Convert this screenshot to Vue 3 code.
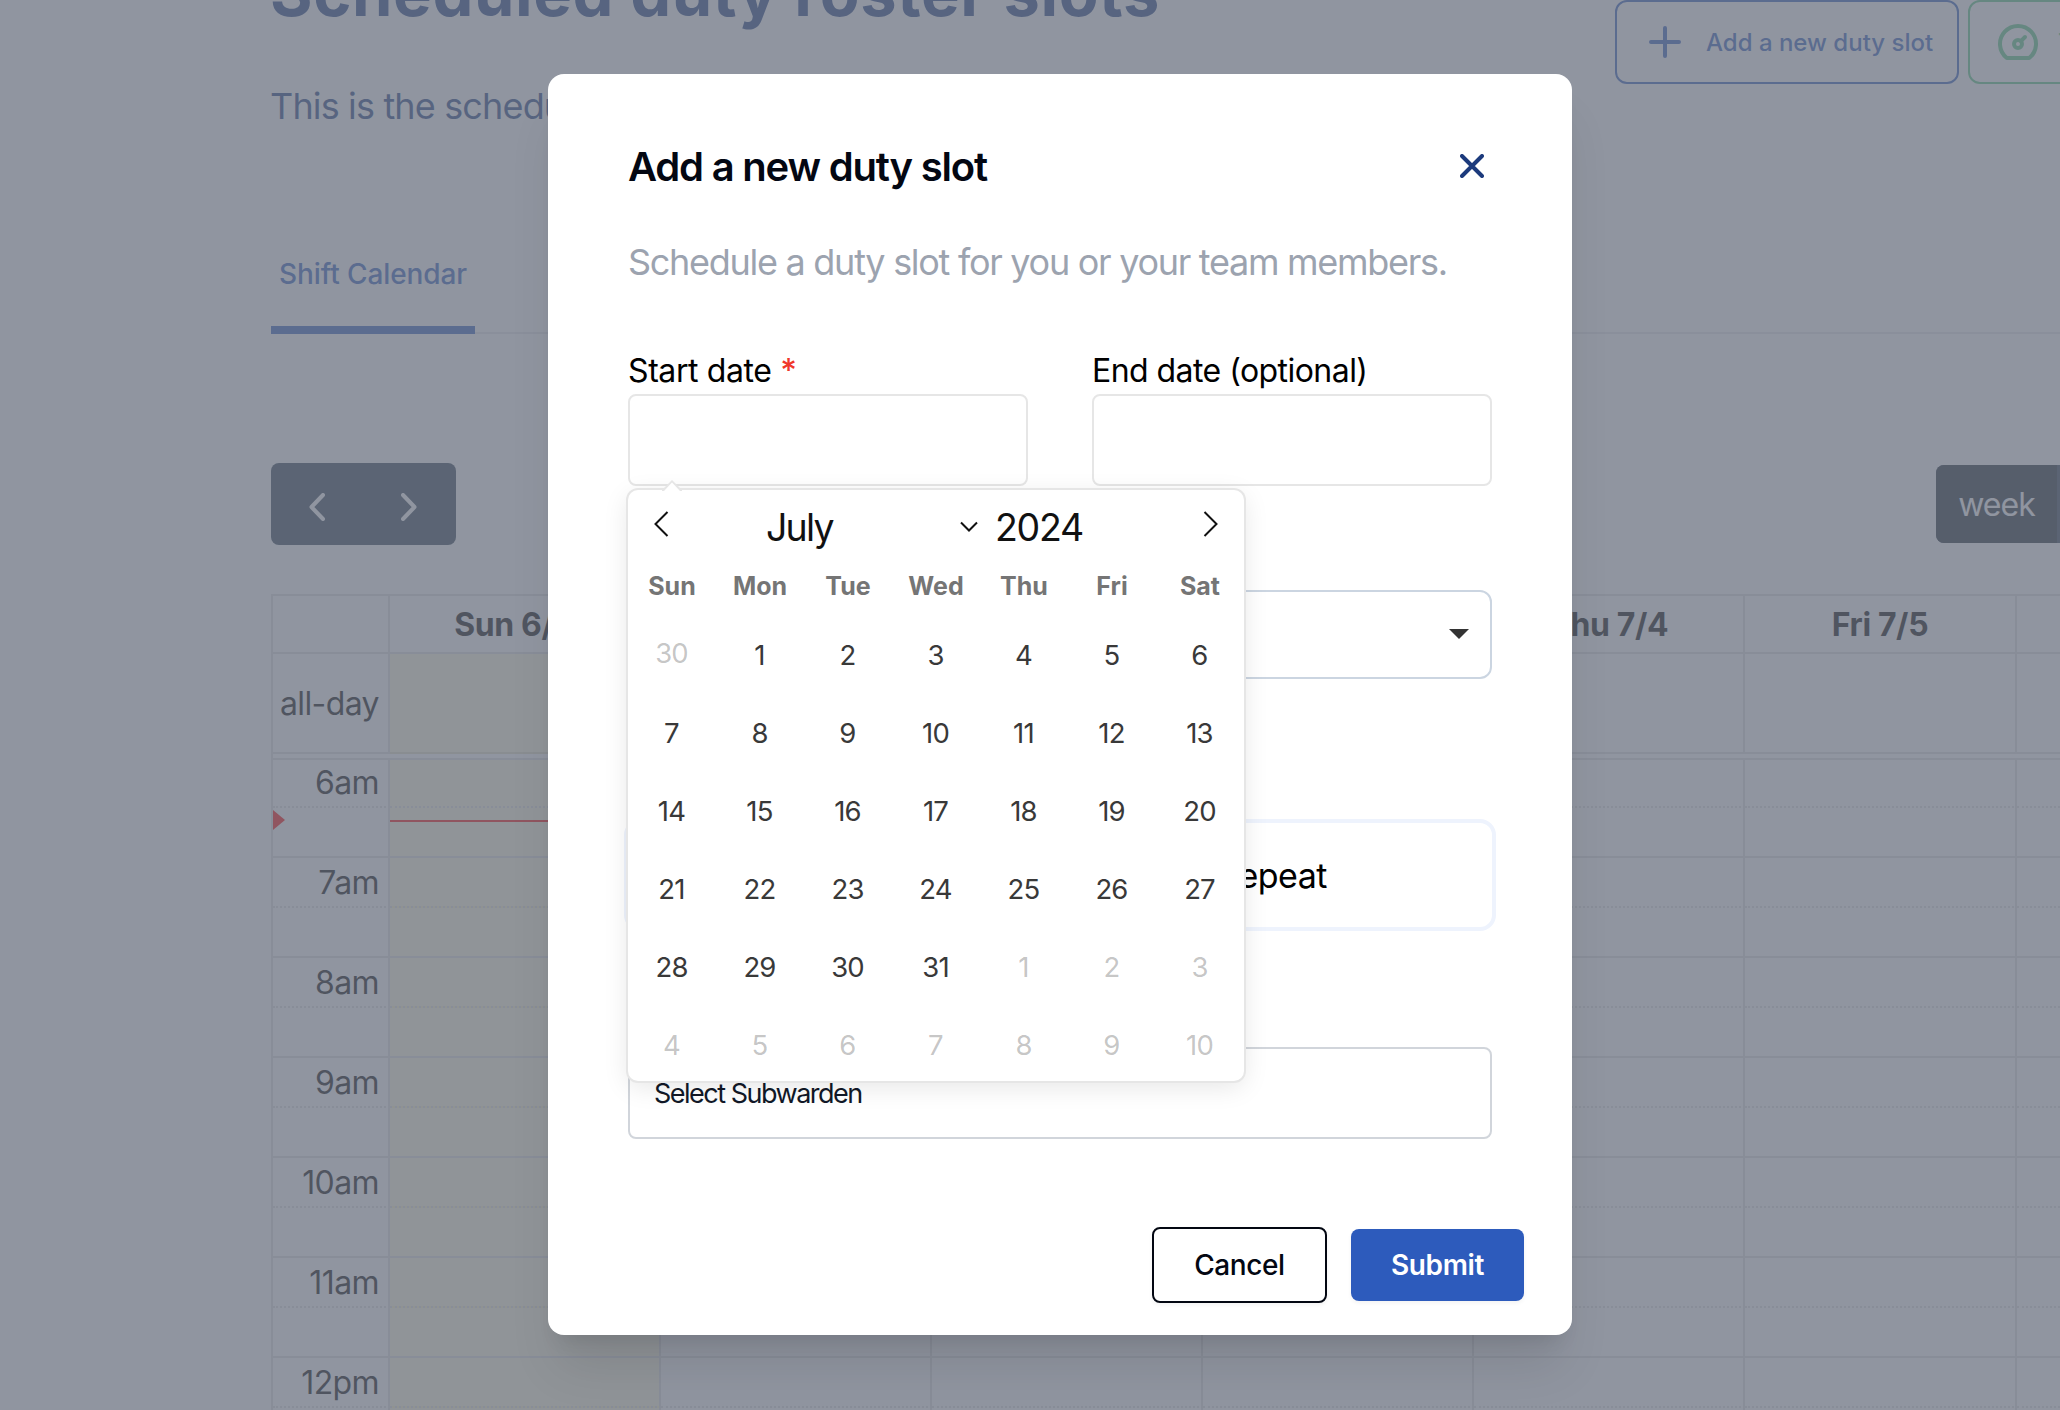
<template>
  <div class="screen">
    <div class="page">
      <header class="page-header">
        <div class="page-intro">
          <h1 class="page-title">Scheduled duty roster slots</h1>
          <p class="page-text">This is the scheduled duty roster</p>
        </div>
        <button class="action action--blue">
          <svg width="48" height="48" viewBox="0 0 24 24" fill="none" stroke="currentColor" stroke-width="2" stroke-linecap="round">
            <path d="M12 5v14M5 12h14" />
          </svg>
          <span>Add a new duty slot</span>
        </button>
        <button class="action action--green">
          <svg width="48" height="48" viewBox="0 0 24 24" fill="none" stroke="currentColor" stroke-width="2" stroke-linecap="round" stroke-linejoin="round">
            <circle cx="12" cy="13" r="2" />
            <path d="M13.45 11.55L15.5 9.5" />
            <path d="M6.4 20a9 9 0 1 1 11.2 0z" />
          </svg>
          <span>T</span>
        </button>
      </header>

      <nav class="tabs">
        <a class="tab">Shift Calendar</a>
      </nav>

      <div class="toolbar">
        <div class="nav-group">
          <svg width="16" height="28" viewBox="0 0 16 28" fill="none" stroke="currentColor" stroke-width="4" stroke-linecap="round" stroke-linejoin="round">
            <path d="M14 2L2.5 14L14 26" />
          </svg>
          <svg width="16" height="28" viewBox="0 0 16 28" fill="none" stroke="currentColor" stroke-width="4" stroke-linecap="round" stroke-linejoin="round">
            <path d="M2 2l11.5 12L2 26" />
          </svg>
        </div>
        <div class="view-group">
          <button class="view view--active">week</button>
          <button class="view">day</button>
        </div>
      </div>

      <div class="calendar">
        <div class="row row--head">
          <div class="cell"></div>
          <div v-for="day in weekDays" :key="day" class="cell">{{ day }}</div>
        </div>
        <div class="row row--allday">
          <div class="cell cell--axis">all-day</div>
          <div v-for="(day, i) in weekDays" :key="day" :class="['cell', { 'cell--today': i === 0 }]"></div>
        </div>
        <div class="divider"></div>
        <div class="slots">
          <div v-for="(slot, n) in slots" :key="n" :class="['row', 'row--slot', { 'row--half': !slot }]">
            <div class="cell cell--axis">{{ slot }}</div>
            <div v-for="(day, i) in weekDays" :key="day" :class="['cell', { 'cell--today': i === 0 }]"></div>
          </div>
          <!-- Current time -->
          <div class="now-arrow"></div>
          <div class="now-line"></div>
        </div>
      </div>
    </div>

    <div class="backdrop"></div>

    <div class="modal-wrap">
      <section class="modal">
        <div class="modal-head">
          <h2 class="modal-title">Add a new duty slot</h2>
          <svg width="24" height="24" viewBox="0 0 24 24" fill="none" stroke="currentColor" stroke-width="4" stroke-linecap="round">
            <path d="M2 2l20 20M22 2L2 22" />
          </svg>
        </div>
        <p class="modal-text">Schedule a duty slot for you or your team members.</p>

        <div class="dates">
          <div class="field">
            <label class="label label--start">Start date <span class="required">*</span></label>
            <div class="input"></div>

            <div class="picker">
              <svg class="picker-tip" width="20" height="12" viewBox="0 0 20 12">
                <path d="M0 11L10 1L20 11V12H0z" fill="#e6e6e6" />
                <path d="M2 12L10 3.5L18 12z" fill="#fff" />
              </svg>
              <div class="months">
                <svg class="prev" width="16" height="26" viewBox="0 0 16 26" fill="none" stroke="currentColor" stroke-width="2">
                  <path d="M14.5 1L2.5 13L14.5 25" />
                </svg>
                <span class="month">July</span>
                <svg class="month-caret" width="18" height="12" viewBox="0 0 18 12" fill="none" stroke="currentColor" stroke-width="2">
                  <path d="M1 1.5L9 9.5L17 1.5" />
                </svg>
                <span class="year">2024</span>
                <svg class="next" width="16" height="26" viewBox="0 0 16 26" fill="none" stroke="currentColor" stroke-width="2">
                  <path d="M1.5 1L13.5 13L1.5 25" />
                </svg>
              </div>
              <div class="weekdays">
                <span v-for="name in dayNames" :key="name">{{ name }}</span>
              </div>
              <div class="days">
                <span v-for="(d, i) in days" :key="i" :class="['day', { 'day--muted': d.muted, 'day--prev': i === 0 }]">{{ d.label }}</span>
              </div>
            </div>
          </div>
          <div class="field">
            <label class="label">End date (optional)</label>
            <div class="input"></div>
          </div>
        </div>

        <div class="select">
          <svg width="20" height="10" viewBox="0 0 20 10"><path d="M0 0h20L10 10z" fill="#333" /></svg>
        </div>

        <div class="repeat">Repeat</div>

        <div class="subwarden">Select Subwarden</div>

        <div class="buttons">
          <button class="btn btn--cancel">Cancel</button>
          <button class="btn btn--submit">Submit</button>
        </div>
      </section>
    </div>
  </div>
</template>

<script setup>
const weekDays = ['Sun 6/30', 'Mon 7/1', 'Tue 7/2', 'Wed 7/3', 'Thu 7/4', 'Fri 7/5', 'Sat 7/6'];
const dayNames = ['Sun', 'Mon', 'Tue', 'Wed', 'Thu', 'Fri', 'Sat'];

// Every hour is followed by an unlabelled half hour
const hours = ['6am', '7am', '8am', '9am', '10am', '11am', '12pm'];
const slots = hours.flatMap((h) => [h, '']);

const days = [{ label: 30, muted: true }];
for (let d = 1; d <= 31; d++) days.push({ label: d, muted: false });
for (let d = 1; d <= 10; d++) days.push({ label: d, muted: true });
</script>

<style>
html,
body {
  margin: 0;
  overflow: hidden;
}
</style>

<style scoped>
.screen {
  position: relative;
  width: 2060px;
  height: 1410px;
  overflow: hidden;
  background: #fff;
  font-family: Inter, "Liberation Sans", sans-serif;
}

.screen * {
  box-sizing: border-box;
}

button {
  border: 0;
  margin: 0;
  padding: 0;
  background: none;
  font-family: inherit;
}

/* Page */
.page {
  width: 2400px;
  height: 1410px;
  overflow: hidden;
  padding-left: 271px;
}

.page-header {
  display: flex;
  align-items: flex-start;
  gap: 9px;
  height: 222px;
}

.page-intro {
  width: 1335px;
  color: #1e3f80;
  white-space: nowrap;
}

.page-title {
  margin: -43px 0 0 -1px;
  font-size: 65px;
  line-height: 72px;
  font-weight: 700;
  letter-spacing: 0.6px;
}

.page-text {
  margin: 53px 0 0 -1px;
  font-size: 36px;
  line-height: 48px;
  letter-spacing: -0.85px;
}

.action {
  display: flex;
  align-items: center;
  height: 84px;
  border: 2px solid currentColor;
  border-radius: 12px;
  font-size: 24px;
  font-weight: 500;
  white-space: nowrap;
}

.action--blue {
  width: 344px;
  padding-left: 24px;
  gap: 17px;
  color: #2d5bbc;
}

.action--green {
  width: 320px;
  padding-left: 24px;
  gap: 16px;
  color: #58c882;
}

.tabs {
  display: flex;
  height: 112px;
  border-bottom: 2px solid #e5e7eb;
}

.tab {
  width: 204px;
  height: 112px;
  padding-top: 32px;
  border-bottom: 8px solid #2d5bbc;
  color: #2d5bbc;
  font-size: 28px;
  line-height: 40px;
  font-weight: 500;
  text-align: center;
  letter-spacing: -0.1px;
}

.toolbar {
  display: flex;
  align-items: center;
  justify-content: space-between;
  width: 1900px;
  height: 82px;
  margin-top: 129px;
}

.nav-group {
  display: flex;
  align-items: center;
  gap: 76px;
  width: 185px;
  height: 82px;
  padding: 0 38px;
  border-radius: 8px;
  background: #2c3e50;
  color: #fff;
}

.nav-group svg {
  flex: none;
  position: relative;
  top: 3px;
}

.view-group {
  display: flex;
  width: 235px;
  height: 78px;
  overflow: hidden;
  border-radius: 8px;
  background: #2c3e50;
}

.view {
  width: 114px;
  color: #fff;
  font-size: 32px;
  letter-spacing: -1px;
}

.view--active {
  width: 121px;
  background: #1a252f;
}

/* Calendar */
.calendar {
  margin-top: 49px;
  width: max-content;
  border-top: 2px solid #ddd;
  border-left: 2px solid #ddd;
  color: #000;
  font-size: 32px;
  line-height: 50px;
}

.row {
  display: grid;
  grid-template-columns: 117px repeat(7, 271.1px);
}

.cell {
  border-right: 2px solid #ddd;
}

.row--head {
  height: 56px;
  line-height: 58px;
  font-weight: 700;
  text-align: center;
  letter-spacing: -0.4px;
}

.row--allday {
  height: 100px;
  border-top: 2px solid #ddd;
  line-height: 100px;
}

.divider {
  height: 8px;
  border-top: 2px solid #ddd;
  border-bottom: 2px solid #ddd;
}

.cell--axis {
  padding-right: 9px;
  text-align: right;
  letter-spacing: -0.6px;
}

.cell--today {
  background: rgba(255, 220, 40, 0.15);
}

.slots {
  position: relative;
}

.row--slot {
  height: 50px;
}

.row--slot .cell {
  border-top: 2px solid #ddd;
}

.row--half .cell {
  border-top-style: dotted;
}

.row--slot:first-child {
  height: 46px;
}

.row--slot:first-child .cell {
  border-top: 0;
  line-height: 46px;
}

.now-arrow {
  position: absolute;
  left: 0;
  top: 50px;
  border: 10px solid transparent;
  border-left: 12px solid red;
  border-right: 0;
}

.now-line {
  position: absolute;
  left: 117px;
  top: 60px;
  width: 269px;
  height: 2px;
  background: red;
}

.backdrop {
  position: absolute;
  inset: 0;
  background: rgba(107, 114, 128, 0.75);
}

/* Modal */
.modal-wrap {
  position: absolute;
  inset: 0;
  display: flex;
  align-items: flex-start;
  padding: 74px 0 0 548px;
}

.modal {
  flex: none;
  width: 1024px;
  height: 1261px;
  padding: 64px 80px 0;
  border-radius: 16px;
  background: #fff;
  box-shadow: 0 40px 50px -10px rgba(0, 0, 0, 0.1), 0 16px 20px -12px rgba(0, 0, 0, 0.1);
}

.modal-head {
  display: flex;
  align-items: center;
  justify-content: space-between;
  height: 56px;
  padding-right: 8px;
  color: #1c3a7c;
}

.modal-title {
  margin: 0;
  color: #030712;
  font-size: 40px;
  line-height: 58px;
  padding-top: 2px;
  font-weight: 600;
  letter-spacing: -1.2px;
}

.modal-text {
  margin: 44px 0 0;
  color: #9ca3af;
  font-size: 36px;
  line-height: 48px;
  letter-spacing: -1.28px;
  white-space: nowrap;
}

.dates {
  display: flex;
  justify-content: space-between;
  margin-top: 60px;
}

.field {
  position: relative;
  width: 400px;
}

.label {
  display: block;
  height: 48px;
  color: #000;
  font-size: 32px;
  line-height: 50px;
  letter-spacing: -0.55px;
}

.label--start {
  letter-spacing: -0.4px;
}

.required {
  color: #f0372b;
  font-weight: 500;
}

.input {
  height: 92px;
  border: 2px solid #e6e6e6;
  border-radius: 8px;
}

.select {
  display: flex;
  align-items: center;
  justify-content: flex-end;
  height: 89px;
  margin-top: 104px;
  padding: 0 21px 2px 0;
  border: 2px solid #cbd5e1;
  border-radius: 12px;
}

.repeat {
  height: 112px;
  margin: 140px -4px 0;
  padding-right: 165px;
  border: 4px solid #eef3fd;
  border-radius: 16px;
  color: #000;
  font-size: 34px;
  line-height: 105px;
  text-align: right;
  letter-spacing: -0.5px;
}

.subwarden {
  height: 92px;
  margin-top: 116px;
  padding-left: 24px;
  border: 2px solid #d1d5db;
  border-radius: 8px;
  color: #111827;
  font-size: 27px;
  line-height: 90px;
  letter-spacing: -1.5px;
}

.buttons {
  display: flex;
  justify-content: flex-end;
  align-items: center;
  gap: 24px;
  height: 76px;
  margin: 88px -32px 0 0;
}

.btn {
  border-radius: 8px;
  font-size: 28px;
  font-weight: 500;
  letter-spacing: -0.4px;
  box-shadow: 0 2px 4px rgba(0, 0, 0, 0.05);
}

.btn--cancel {
  width: 175px;
  height: 76px;
  border: 2px solid #030712;
  color: #030712;
}

.btn--submit {
  width: 173px;
  height: 72px;
  background: #2d5bbc;
  color: #fff;
  font-weight: 600;
}

/* Date picker */
.picker {
  position: absolute;
  left: 0;
  top: 144px;
  z-index: 2;
  width: 616px;
  height: 591px;
  border-radius: 10px;
  background: #fff;
  box-shadow: 0 0 0 2px #e6e6e6, 0 6px 26px rgba(0, 0, 0, 0.1);
}

.picker-tip {
  position: absolute;
  left: 34px;
  top: -11px;
}

.months {
  display: flex;
  align-items: flex-start;
  height: 76px;
  color: #111;
  font-size: 37.5px;
  line-height: 76px;
}

.prev {
  margin: 21px 0 0 25px;
}

.month {
  width: 194px;
  margin-left: 97px;
  letter-spacing: -1.8px;
}

.month-caret {
  margin-top: 31px;
}

.year {
  width: 208px;
  margin-left: 17px;
  letter-spacing: -1.3px;
}

.next {
  margin-top: 21px;
}

.weekdays {
  display: grid;
  grid-template-columns: repeat(7, 88px);
  height: 49.5px;
  color: #757575;
  font-size: 25px;
  line-height: 41px;
  font-weight: 700;
  text-align: center;
}

.days {
  display: grid;
  grid-template-columns: repeat(7, 88px);
  grid-auto-rows: 78px;
  margin-left: -0.5px;
  color: #393939;
  font-size: 27.5px;
  line-height: 78px;
  text-align: center;
  letter-spacing: -0.8px;
}

.day--muted {
  color: rgba(57, 57, 57, 0.3);
}

.day--prev {
  line-height: 74px;
}
</style>
